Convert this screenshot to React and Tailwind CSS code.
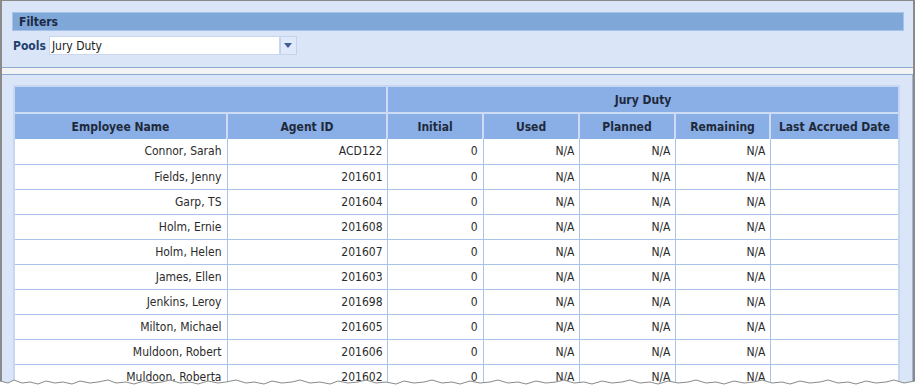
const ROWS = [
  ['Connor, Sarah', 'ACD122'],
  ['Fields, Jenny', '201601'],
  ['Garp, TS', '201604'],
  ['Holm, Ernie', '201608'],
  ['Holm, Helen', '201607'],
  ['James, Ellen', '201603'],
  ['Jenkins, Leroy', '201698'],
  ['Milton, Michael', '201605'],
  ['Muldoon, Robert', '201606'],
  ['Muldoon, Roberta', '201602'],
];

const COLS = ['Employee Name', 'Agent ID', 'Initial', 'Used', 'Planned', 'Remaining', 'Last Accrued Date'];
const WIDTHS = ['w-[212px]', 'w-[160px]', 'w-[96px]', 'w-[96px]', 'w-[96px]', 'w-[95px]', 'w-[128px]'];

const EDGE =
  'M0 4 L8 6 L14 3 L22 6 L30 5 L38 7 L46 4 L55 6 L63 5 L72 7 L80 4 L90 6 L98 5 L108 3 L116 6 L126 5 L134 7 L144 4 L152 6 L162 5 L170 3 L180 6 L190 5 L198 7 L208 4 L218 6 L226 5 L236 3 L246 6 L254 5 L264 7 L272 4 L282 6 L292 5 L300 3 L310 6 L320 5 L330 7 L338 4 L348 6 L358 5 L366 3 L376 6 L386 5 L396 7 L404 4 L414 6 L424 5 L432 3 L442 6 L452 5 L460 7 L470 4 L480 6 L490 5 L498 3 L508 6 L518 5 L526 7 L536 4 L546 6 L556 5 L564 3 L574 6 L584 5 L592 7 L602 4 L612 6 L622 5 L630 3 L640 6 L650 5 L658 7 L668 4 L678 6 L688 5 L696 3 L706 6 L716 5 L724 7 L734 4 L744 6 L754 5 L762 3 L772 6 L782 5 L790 7 L800 4 L810 6 L820 5 L828 3 L838 6 L848 5 L856 7 L866 4 L876 6 L886 5 L894 3 L904 6 L915 4';

function TornEdge() {
  return (
    <svg className="absolute left-0 bottom-0" width="915" height="12" viewBox="0 0 915 12">
      <path d={EDGE + ' L915 12 L0 12 Z'} fill="#ffffff" />
      <path d={EDGE} fill="none" stroke="#8a8a8a" strokeWidth="1" />
    </svg>
  );
}

export default function App() {
  return (
    <div
      className="relative w-[915px] h-[389px] overflow-hidden bg-white text-[12px] text-[#2b2b2b]"
      style={{ fontFamily: '"DejaVu Sans Condensed", "DejaVu Sans", sans-serif' }}
    >
      <div className="h-full flex flex-col border-t border-x-2 border-[#8a8a8a]">
        {/* Filters panel */}
        <div className="h-[67px] shrink-0 bg-[#dae5f8] border-b border-[#8ea9d2] pl-[10px] pr-[9px] pt-[11px]">
          <div className="h-[19px] bg-[#7fa7d8] border border-[#a5c2ea] flex items-center pl-[6px] font-bold text-[#1c2a44]">
            Filters
          </div>
          <div className="mt-[5px] flex items-center">
            <span className="font-bold text-[#22406f] pl-[1px] pr-[3px]">Pools</span>
            <div className="w-[231px] h-[19px] bg-white border border-[#c9d6ec] flex items-center pl-[2px] text-[#1a1a1a]">
              Jury Duty
            </div>
            <div className="w-[17px] h-[19px] bg-[#dfe9f9] border border-[#c3d3ee] flex items-center justify-center">
              <svg width="8" height="5" viewBox="0 0 8 5">
                <path d="M0 0 H8 L4 5 Z" fill="#3d5f96" />
              </svg>
            </div>
          </div>
        </div>
        <div className="h-[7px] shrink-0 bg-[#f3f3f3] border-b border-[#8ea9d2]" />

        {/* Grid panel */}
        <div className="flex-1 bg-[#dae5f8] border-r border-[#9fb6dc] pl-[11px] pt-[10px] pr-[11px]">
          <div className="w-[887px] border-2 border-[#c8d7f1] bg-white">
            <table className="table-fixed border-collapse w-full">
              <colgroup>
                {WIDTHS.map((w, i) => (
                  <col key={i} className={w} />
                ))}
              </colgroup>
              <thead>
                <tr className="h-[26px] bg-[#8aaee6]">
                  <th colSpan={2} className="border-r-2 border-b-2 border-[#cddcf4]" />
                  <th colSpan={5} className="border-b-2 border-[#cddcf4] font-bold text-[#1e2a3a] text-center">
                    Jury Duty
                  </th>
                </tr>
                <tr className="h-[26px] bg-[#8aaee6]">
                  {COLS.map((c, i) => (
                    <th
                      key={c}
                      className={`font-bold text-[#1e2a3a] text-center whitespace-nowrap ${i < 6 ? 'border-r-2 border-[#cddcf4]' : ''}`}
                    >
                      {c}
                    </th>
                  ))}
                </tr>
              </thead>
              <tbody>
                {ROWS.map(([name, id]) => (
                  <tr key={name} className="h-[25px] border-b border-[#a9c3ea]">
                    <td className="text-right pr-[5px] border-r border-[#a9c3ea] whitespace-nowrap">{name}</td>
                    <td className="text-right pr-[4px] border-r border-[#a9c3ea]">{id}</td>
                    <td className="text-right pr-[5px] border-r border-[#a9c3ea]">0</td>
                    <td className="text-right pr-[4px] border-r border-[#a9c3ea]">N/A</td>
                    <td className="text-right pr-[4px] border-r border-[#a9c3ea]">N/A</td>
                    <td className="text-right pr-[4px] border-r border-[#a9c3ea]">N/A</td>
                    <td />
                  </tr>
                ))}
              </tbody>
            </table>
          </div>
        </div>
      </div>
      <TornEdge />
    </div>
  );
}
